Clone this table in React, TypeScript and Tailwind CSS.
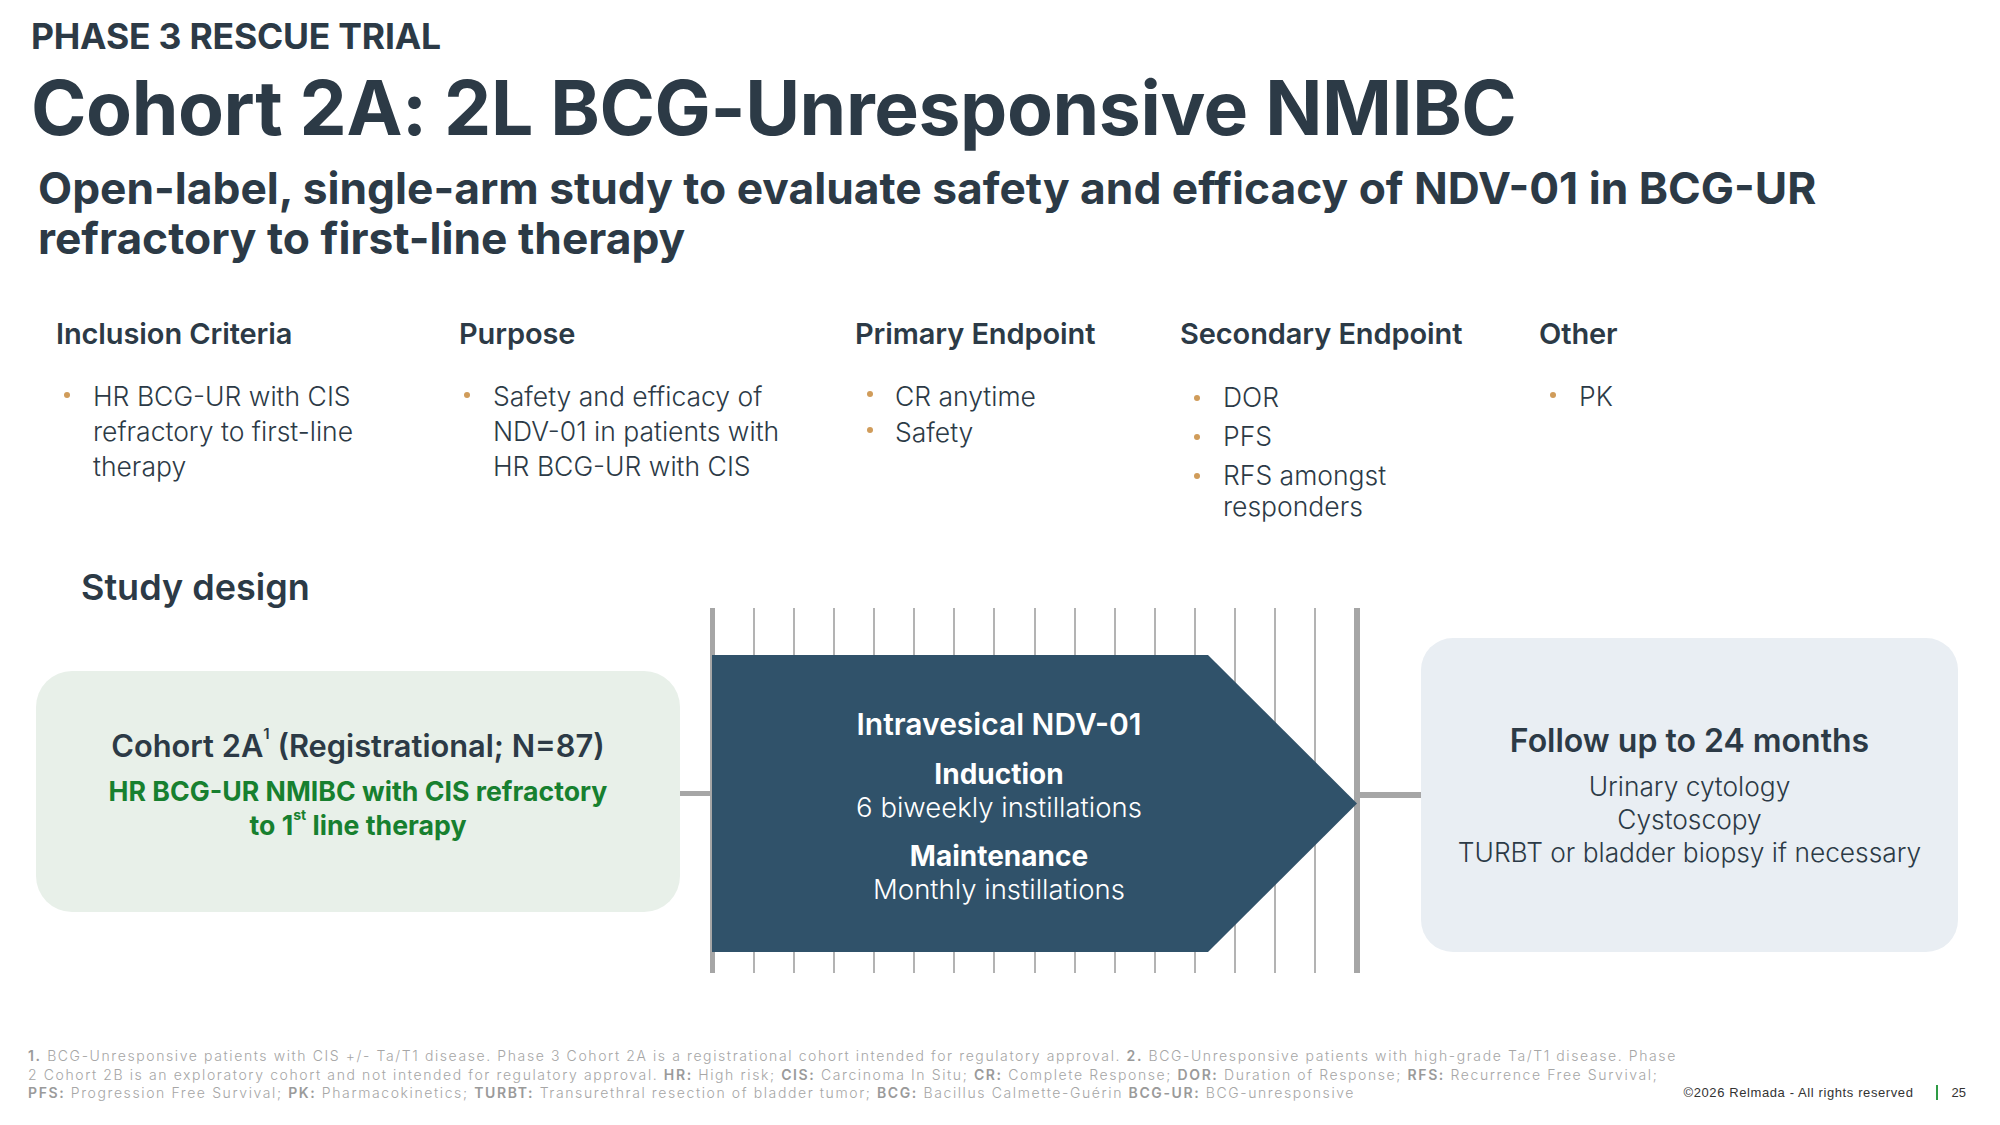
import React from "react";

type Col = {
  title: string;
  width: string;
  dotPad: string;
  listTop: string;
  leading: string;
  gap: string;
  items: React.ReactNode[];
};

const cols: Col[] = [
  {
    title: "Inclusion Criteria",
    width: "w-[403px]",
    dotPad: "pl-[8px] w-[37px]",
    listTop: "mt-[27px]",
    leading: "leading-[35px]",
    gap: "gap-0",
    items: [
      <>
        HR BCG-UR with CIS
        <br />
        refractory to first-line
        <br />
        therapy
      </>,
    ],
  },
  {
    title: "Purpose",
    width: "w-[396px]",
    dotPad: "pl-[5px] w-[34px]",
    listTop: "mt-[27px]",
    leading: "leading-[35px]",
    gap: "gap-0",
    items: [
      <>
        Safety and efficacy of
        <br />
        NDV-01 in patients with
        <br />
        HR BCG-UR with CIS
      </>,
    ],
  },
  {
    title: "Primary Endpoint",
    width: "w-[325px]",
    dotPad: "pl-[12px] w-[40px]",
    listTop: "mt-[26px]",
    leading: "leading-[36px]",
    gap: "gap-0",
    items: ["CR anytime", "Safety"],
  },
  {
    title: "Secondary Endpoint",
    width: "w-[359px]",
    dotPad: "pl-[14px] w-[43px]",
    listTop: "mt-[30px]",
    leading: "leading-[31px]",
    gap: "gap-[8px]",
    items: [
      "DOR",
      "PFS",
      <>
        RFS amongst
        <br />
        responders
      </>,
    ],
  },
  {
    title: "Other",
    width: "w-[300px]",
    dotPad: "pl-[11px] w-[40px]",
    listTop: "mt-[27px]",
    leading: "leading-[35px]",
    gap: "gap-0",
    items: ["PK"],
  },
];

function Column({ c }: { c: Col }) {
  return (
    <div className={`${c.width} shrink-0 flex flex-col`}>
      <div className="text-[29px] leading-[36px] font-semibold tracking-[-0.1px] text-[#2c3a46]">
        {c.title}
      </div>
      <ul className={`${c.listTop} flex flex-col ${c.gap}`}>
        {c.items.map((it, i) => (
          <li key={i} className="flex">
            <span className={`${c.dotPad} shrink-0 flex`}>
              <span className="mt-[13px] w-[6px] h-[6px] rounded-full bg-[#d09c5a]" />
            </span>
            <span
              className={`text-[26.5px] ${c.leading} font-light text-[#2c3a46] whitespace-nowrap`}
            >
              {it}
            </span>
          </li>
        ))}
      </ul>
    </div>
  );
}

function Timeline() {
  const thin = Array.from({ length: 15 });
  return (
    <div className="relative w-[650px] h-[365px] shrink-0 flex justify-between">
      <div className="w-[5px] h-full bg-[#a6a6a6]" />
      {thin.map((_, i) => (
        <div key={i} className="w-[2px] h-full bg-[#b3b3b3]" />
      ))}
      <div className="w-[6px] h-full bg-[#a6a6a6]" />
      <svg
        className="absolute left-[2px] top-[47px]"
        width="645"
        height="297"
        viewBox="0 0 645 297"
      >
        <polygon points="0,0 496,0 645,148.5 496,297 0,297" fill="#30526a" />
      </svg>
      <div className="absolute left-[2px] top-[49px] w-[574px] h-[297px] flex flex-col items-center justify-center text-white text-center">
        <div className="text-[30px] leading-[36px] font-semibold">
          Intravesical NDV-01
        </div>
        <div className="mt-[16px] text-[28px] leading-[33px] font-bold">
          Induction
        </div>
        <div className="text-[27.5px] leading-[33px] font-light">
          6 biweekly instillations
        </div>
        <div className="mt-[16px] text-[28px] leading-[33px] font-bold">
          Maintenance
        </div>
        <div className="text-[27.5px] leading-[33px] font-light">
          Monthly instillations
        </div>
      </div>
    </div>
  );
}

export default function App() {
  const b = "font-semibold text-[#9a9a9a]";
  return (
    <div className="w-[2000px] h-[1125px] bg-white overflow-hidden flex flex-col font-[Inter,sans-serif] text-[#2c3a46]">
      <div className="pt-[17px] pl-[31px]">
        <div className="text-[35.5px] leading-[40px] font-bold tracking-[-0.2px]">
          PHASE 3 RESCUE TRIAL
        </div>
        <h1 className="mt-[7px] text-[75px] leading-[88px] font-bold tracking-[-0.4px]">
          Cohort 2A: 2L BCG-Unresponsive NMIBC
        </h1>
        <p className="mt-[11px] ml-[7px] text-[44.3px] leading-[50px] font-bold">
          Open-label, single-arm study to evaluate safety and efficacy of NDV-01
          in BCG-UR
          <br />
          refractory to first-line therapy
        </p>
      </div>

      <div className="mt-[53px] h-[250px] flex pl-[56px]">
        {cols.map((c) => (
          <Column key={c.title} c={c} />
        ))}
      </div>

      <div className="pl-[81px] text-[36px] leading-[42px] font-semibold">
        Study design
      </div>

      <div className="h-[365px] flex items-center pl-[36px]">
        <div className="mt-[2px] w-[644px] h-[241px] shrink-0 rounded-[36px] bg-[#e8f0e9] flex flex-col items-center pt-[56px] text-center">
          <div className="text-[30.8px] leading-[38px] font-semibold text-[#2c3a46]">
            Cohort 2A
            <sup className="text-[15px] leading-[0] align-[11px]">1</sup>{" "}
            (Registrational; N=87)
          </div>
          <div className="mt-[9px] text-[26.7px] leading-[34px] font-bold text-[#17802f]">
            HR BCG-UR NMIBC with CIS refractory
            <br />
            to 1<sup className="text-[14px] leading-[0] align-[8px]">st</sup>{" "}
            line therapy
          </div>
        </div>
        <div className="mt-[5px] w-[30px] h-[5px] shrink-0 bg-[#a6a6a6]" />
        <Timeline />
        <div className="mt-[9px] w-[61px] h-[6px] shrink-0 bg-[#a6a6a6]" />
        <div className="mt-[9px] w-[537px] h-[314px] shrink-0 rounded-[32px] bg-[#e9eef3] flex flex-col items-center pt-[84px] text-center">
          <div className="text-[32px] leading-[38px] font-semibold text-[#2c3a46]">
            Follow up to 24 months
          </div>
          <div className="mt-[10px] text-[26.3px] leading-[33px] font-light text-[#2c3a46]">
            Urinary cytology
            <br />
            Cystoscopy
            <br />
            TURBT or bladder biopsy if necessary
          </div>
        </div>
      </div>

      <div className="mt-[74px] flex items-end justify-between pl-[28px] pr-[34px]">
        <div className="text-[14px] leading-[18.5px] font-light tracking-[1.6px] text-[#a6a6a6] whitespace-nowrap">
          <span className={b}>1.</span> BCG-Unresponsive patients with CIS +/-
          Ta/T1 disease. Phase 3 Cohort 2A is a registrational cohort intended
          for regulatory approval. <span className={b}>2.</span> BCG-Unresponsive
          patients with high-grade Ta/T1 disease. Phase
          <br />2 Cohort 2B is an exploratory cohort and not intended for
          regulatory approval. <span className={b}>HR:</span> High risk;{" "}
          <span className={b}>CIS:</span> Carcinoma In Situ;{" "}
          <span className={b}>CR:</span> Complete Response;{" "}
          <span className={b}>DOR:</span> Duration of Response;{" "}
          <span className={b}>RFS:</span> Recurrence Free Survival;
          <br />
          <span className={b}>PFS:</span> Progression Free Survival;{" "}
          <span className={b}>PK:</span> Pharmacokinetics;{" "}
          <span className={b}>TURBT:</span> Transurethral resection of bladder
          tumor; <span className={b}>BCG:</span> Bacillus Calmette-Guérin{" "}
          <span className={b}>BCG-UR:</span> BCG-unresponsive
        </div>
        <div className="flex items-center font-['Liberation_Sans',Arial,sans-serif] text-[13px] leading-[18px] text-[#333] mb-[1px]">
          <span className="tracking-[0.6px]">©2026 Relmada - All rights reserved</span>
          <span className="ml-[22px] w-[2px] h-[15px] bg-[#2e9b45]" />
          <span className="ml-[14px]">25</span>
        </div>
      </div>
    </div>
  );
}
